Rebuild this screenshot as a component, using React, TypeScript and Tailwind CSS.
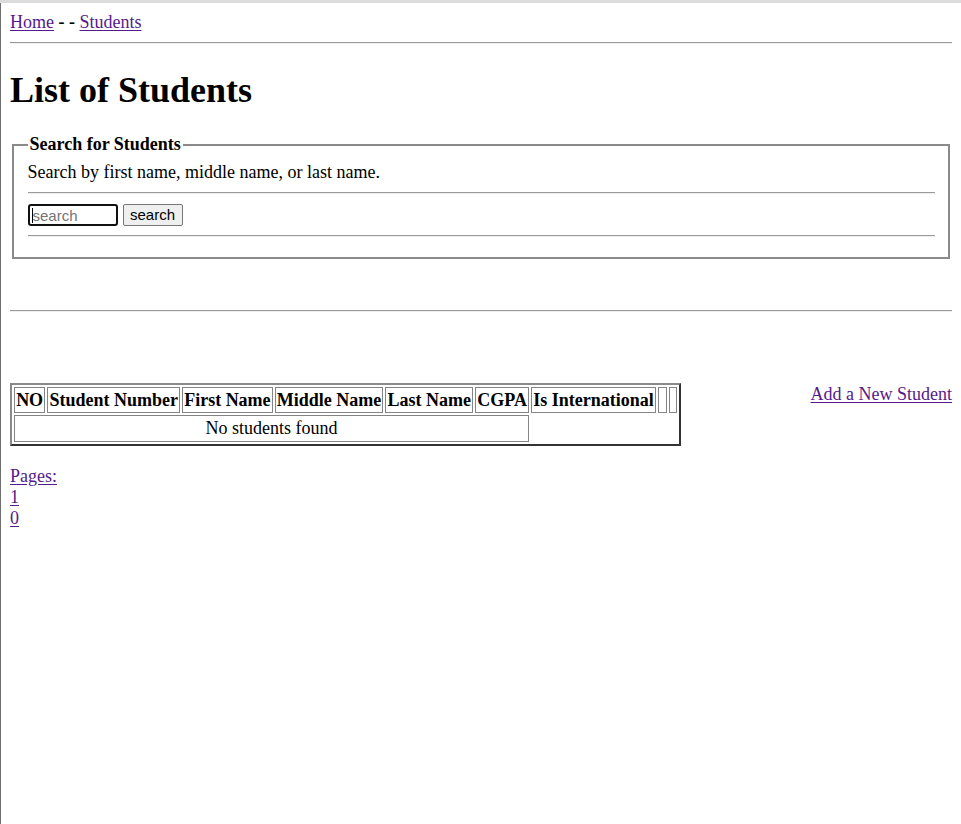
// Students list page - plain HTML look, rendered at 112.5% zoom

const serif = "font-['Liberation_Serif','Times_New_Roman',serif]";
const sans = "font-['Liberation_Sans',Arial,sans-serif]";

function Rule({ className = "" }: { className?: string }) {
    return (
        <div
            className={`h-[2px] border-t border-b border-t-[#9a9a9a] border-b-[#eeeeee] ${className}`}
        />
    );
}

function Link({ children }: { children: React.ReactNode }) {
    return (
        <a href="#" className="text-[#551a8b] underline underline-offset-[2px]">
            {children}
        </a>
    );
}

const headers = [
    "NO",
    "Student Number",
    "First Name",
    "Middle Name",
    "Last Name",
    "CGPA",
    "Is International",
];

export default function App() {
    return (
        <div className={`min-h-screen bg-white text-black ${serif} text-[18px] leading-[21px]`}>
            {/* top strip */}
            <div className="h-[3px] bg-[#dcdcdc]" />

            <div className="min-h-[821px] border-l border-[#707070] px-[9px] pt-[9px]">
                {/* Breadcrumb */}
                <div className="h-[21px]">
                    <Link>Home</Link> <b>- -</b> <Link>Students</Link>
                </div>

                <Rule className="mt-[9px]" />

                <h1 className="mt-[26px] text-[36px] font-bold leading-[41px]">List of Students</h1>

                {/* Search box */}
                <fieldset className="mx-[2px] mt-[23px] border-2 border-[#8a8a8a] px-[13.5px] pt-[7px] pb-[20px]">
                    <legend className="px-[2px] font-bold leading-[21px]">Search for Students</legend>
                    <div className="h-[21px]">Search by first name, middle name, or last name.</div>
                    <Rule className="mt-[9px]" />
                    <div className="mt-[10px] flex h-[22px] items-center gap-[5px]">
                        <div
                            className={`flex h-[22px] w-[90px] items-center rounded-[3px] border-2 border-[#101010] pl-[2px] ${sans} text-[15px]`}
                        >
                            <span className="h-[15px] w-[1px] bg-black" />
                            <span className="text-[#757575]">search</span>
                        </div>
                        <button
                            type="button"
                            className={`h-[22px] w-[60px] rounded-[2px] border border-[#767676] bg-[#efefef] ${sans} text-[15px] leading-[18px] text-black`}
                        >
                            search
                        </button>
                    </div>
                    <Rule className="mt-[9px]" />
                </fieldset>

                <Rule className="mt-[51px]" />

                {/* Table + add link */}
                <div className="mt-[71px] flex items-start justify-between">
                    <table className="border-separate border-spacing-[2px] border-2 border-t-[#8a8a8a] border-l-[#8a8a8a] border-r-[#333333] border-b-[#333333]">
                        <thead>
                            <tr>
                                {headers.map((h) => (
                                    <th
                                        key={h}
                                        className="border border-[#858585] px-[1.125px] py-[1px] text-center font-bold leading-[22px] whitespace-nowrap"
                                    >
                                        {h}
                                    </th>
                                ))}
                                <th className="w-[9px] border border-[#858585] p-0" />
                                <th className="w-[8px] border border-[#858585] p-0" />
                            </tr>
                        </thead>
                        <tbody>
                            <tr>
                                <td
                                    colSpan={6}
                                    className="border border-[#858585] p-[1px] text-center leading-[23px]"
                                >
                                    No students found
                                </td>
                            </tr>
                        </tbody>
                    </table>
                    <div className="mt-[1px]">
                        <Link>Add a New Student</Link>
                    </div>
                </div>

                {/* Pagination */}
                <div className="mt-[20px]">
                    <div>
                        <Link>Pages:</Link>
                    </div>
                    <div>
                        <Link>1</Link>
                    </div>
                    <div>
                        <Link>0</Link>
                    </div>
                </div>
            </div>
        </div>
    );
}
